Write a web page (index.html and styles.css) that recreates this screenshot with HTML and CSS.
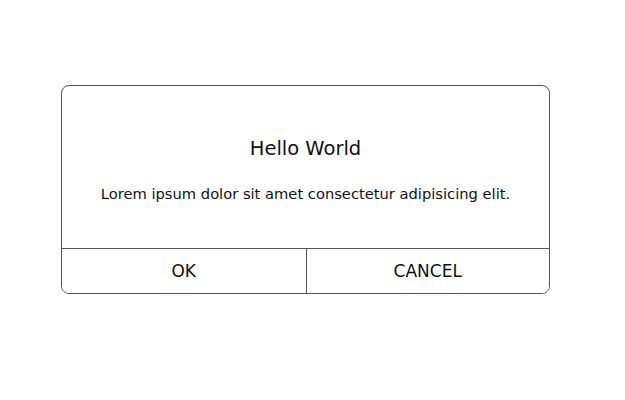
FILE: index.html
```html
<!DOCTYPE html>
<html>
<head>
<meta charset="utf-8">
<link rel="stylesheet" href="styles.css">
</head>
<body>
  <div class="dialog">
    <div class="dialog-body">
      <h2 class="dialog-title">Hello World</h2>
      <p class="dialog-text">Lorem ipsum dolor sit amet consectetur adipisicing elit.</p>
    </div>
    <div class="dialog-actions">
      <button class="dialog-btn">OK</button>
      <button class="dialog-btn">CANCEL</button>
    </div>
  </div>
</body>
</html>
```

FILE: styles.css
```css
html, body {
  margin: 0;
  background: #fff;
}

body {
  font-family: "DejaVu Sans", sans-serif;
  color: #111;
  padding: 85px 0 0 61px;
}

.dialog {
  box-sizing: border-box;
  width: 489px;
  border: 1px solid #555;
  border-radius: 8px;
  overflow: hidden;
}

.dialog-body {
  display: flex;
  flex-direction: column;
  align-items: center;
  padding: 52px 20px 46px;
  gap: 25px;
}

.dialog-title {
  margin: 0;
  font-size: 19.5px;
  font-weight: normal;
  line-height: 22px;
}

.dialog-text {
  margin: 0;
  font-size: 14.7px;
  line-height: 17px;
}

.dialog-actions {
  display: grid;
  grid-template-columns: 1fr 1fr;
  border-top: 1px solid #555;
}

.dialog-btn {
  height: 44px;
  background: #fff;
  border: 0;
  font-family: inherit;
  font-size: 17px;
  color: #111;
  padding: 0;
}

.dialog-btn + .dialog-btn {
  border-left: 1px solid #555;
}
```
